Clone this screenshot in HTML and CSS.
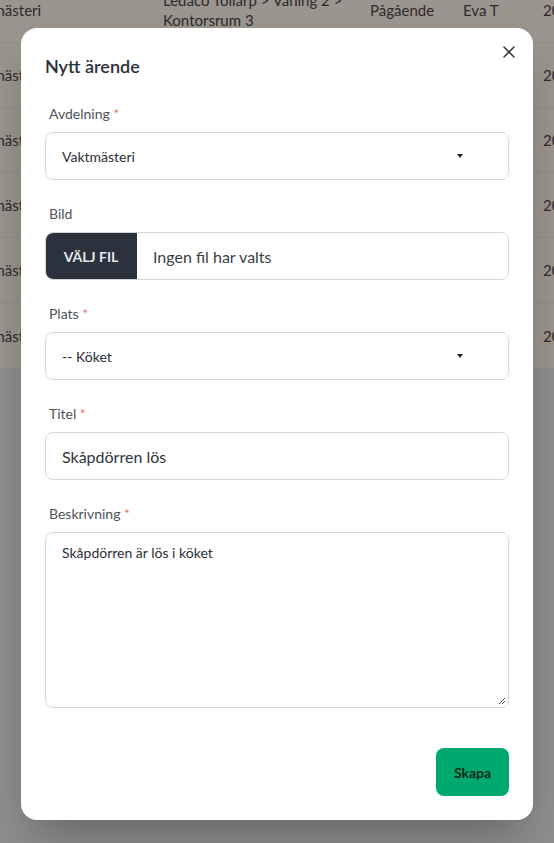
FILE: index.html
```html
<!DOCTYPE html>
<html lang="sv">
<head>
<meta charset="utf-8">
<title>Nytt ärende</title>
<link rel="stylesheet" href="styles.css">
</head>
<body>
<div class="page">
  <div class="table">
    <div class="row">
      <div class="c1">Vaktmästeri</div>
      <div class="c2">Ledaco Tollarp &gt; Våning 2 &gt; Kontorsrum 3</div>
      <div class="c3">Pågående</div>
      <div class="c4">Eva T</div>
      <div class="c5">2024</div>
    </div>
    <div class="row"><div class="c1">Vaktmästeri</div><div class="c2"></div><div class="c3"></div><div class="c4"></div><div class="c5">2024</div></div>
    <div class="row"><div class="c1">Vaktmästeri</div><div class="c2"></div><div class="c3"></div><div class="c4"></div><div class="c5">2024</div></div>
    <div class="row"><div class="c1">Vaktmästeri</div><div class="c2"></div><div class="c3"></div><div class="c4"></div><div class="c5">2024</div></div>
    <div class="row"><div class="c1">Vaktmästeri</div><div class="c2"></div><div class="c3"></div><div class="c4"></div><div class="c5">2024</div></div>
    <div class="row last"><div class="c1">Vaktmästeri</div><div class="c2"></div><div class="c3"></div><div class="c4"></div><div class="c5">2024</div></div>
  </div>
</div>

<div class="backdrop">
  <div class="modal">
    <button class="close" aria-label="Stäng">
      <svg width="14" height="14" viewBox="0 0 14 14"><path d="M2 2 L12 12 M12 2 L2 12" stroke="#3a3f47" stroke-width="1.6" stroke-linecap="round" fill="none"/></svg>
    </button>
    <h3 class="title">Nytt ärende</h3>

    <div class="field">
      <label class="label">Avdelning <span class="req">*</span></label>
      <div class="select"><span>Vaktmästeri</span><span class="caret"></span></div>
    </div>

    <div class="field">
      <label class="label">Bild</label>
      <div class="file"><span class="file-btn">VÄLJ FIL</span><span class="file-text">Ingen fil har valts</span></div>
    </div>

    <div class="field">
      <label class="label">Plats <span class="req">*</span></label>
      <div class="select"><span>-- Köket</span><span class="caret"></span></div>
    </div>

    <div class="field">
      <label class="label">Titel <span class="req">*</span></label>
      <div class="input">Skåpdörren lös</div>
    </div>

    <div class="field">
      <label class="label">Beskrivning <span class="req">*</span></label>
      <div class="textarea">Skåpdörren är lös i köket
        <svg class="grip" width="9" height="9" viewBox="0 0 9 9"><path d="M8 2 L2 8 M8 5 L5 8" stroke="#555" stroke-width="1" fill="none"/></svg>
      </div>
    </div>

    <div class="actions">
      <button class="btn-create">Skapa</button>
    </div>
  </div>
</div>
</body>
</html>
```

FILE: styles.css
```css
* { box-sizing: border-box; }
html, body { margin: 0; padding: 0; }
body {
  width: 554px;
  height: 843px;
  overflow: hidden;
  background: #8e8e8e;
  font-family: Lato, "Liberation Sans", sans-serif;
  position: relative;
}
.page { width: 554px; overflow: hidden; }
.table {
  background: #9a958e;
  margin-top: -22px;
}
.row {
  display: flex;
  align-items: center;
  height: 65px;
  border-bottom: 1px solid #928d87;
  color: #2c2c2c;
  font-size: 15px;
  line-height: 20px;
}
.row.last { border-bottom: none; }
.c1 { width: 200px; margin-left: -37px; flex: none; white-space: nowrap; }
.c2 { width: 207px; flex: none; }
.c3 { width: 93px; flex: none; }
.c4 { width: 80px; flex: none; }
.c5 { width: 60px; flex: none; white-space: nowrap; }

.backdrop {
  position: absolute;
  inset: 0;
  display: flex;
  justify-content: center;
  align-items: flex-start;
  padding-top: 28px;
}
.modal {
  position: relative;
  width: 512px;
  background: #fff;
  border-radius: 16px;
  padding: 24px;
  box-shadow: 0 25px 50px -12px rgba(0,0,0,0.3);
}
.close {
  position: absolute;
  top: 8px;
  right: 8px;
  width: 32px;
  height: 32px;
  border: none;
  background: transparent;
  border-radius: 50%;
  display: flex;
  align-items: center;
  justify-content: center;
  padding: 0;
}
.title {
  margin: 0;
  font-size: 18px;
  line-height: 28px;
  font-weight: 600;
  color: #2a2f38;
}
.field { margin-top: 16px; }
.label {
  display: block;
  padding: 8px 4px;
  font-size: 14px;
  line-height: 20px;
  color: #4d525a;
}
.req { color: #f87272; }
.select, .input, .file {
  height: 48px;
  border: 1px solid #d6d6d6;
  border-radius: 8px;
  display: flex;
  align-items: center;
  color: #2a2f38;
}
.select {
  padding: 0 46px 0 16px;
  justify-content: space-between;
  font-size: 14px;
}
.caret {
  width: 0; height: 0;
  border-left: 3.5px solid transparent;
  border-right: 3.5px solid transparent;
  border-top: 4px solid #222;
  margin-right: -1px;
}
.input {
  padding: 0 16px;
  font-size: 16px;
  color: #2f3339;
}
.file { overflow: hidden; }
.file-btn {
  height: 100%;
  width: 92px;
  margin-left: -1px;
  background: #2b323d;
  color: #e6e8ea;
  font-weight: 700;
  font-size: 14px;
  display: flex;
  align-items: center;
  justify-content: center;
  border-radius: 8px 0 0 8px;
}
.file-text {
  margin-left: 16px;
  font-size: 16px;
  color: #3a3f46;
}
.textarea {
  position: relative;
  height: 176px;
  border: 1px solid #d6d6d6;
  border-radius: 8px;
  padding: 8px 16px;
  font-size: 14px;
  line-height: 24px;
  color: #2a2f38;
}
.grip { position: absolute; right: 2px; bottom: 2px; }
.actions {
  display: flex;
  justify-content: flex-end;
  margin-top: 40px;
}
.btn-create {
  height: 48px;
  width: 73px;
  padding: 0;
  border: none;
  border-radius: 8px;
  background: #00a96e;
  color: #052a18;
  font-family: Lato, "Liberation Sans", sans-serif;
  font-size: 14px;
  font-weight: 700;
}
```
